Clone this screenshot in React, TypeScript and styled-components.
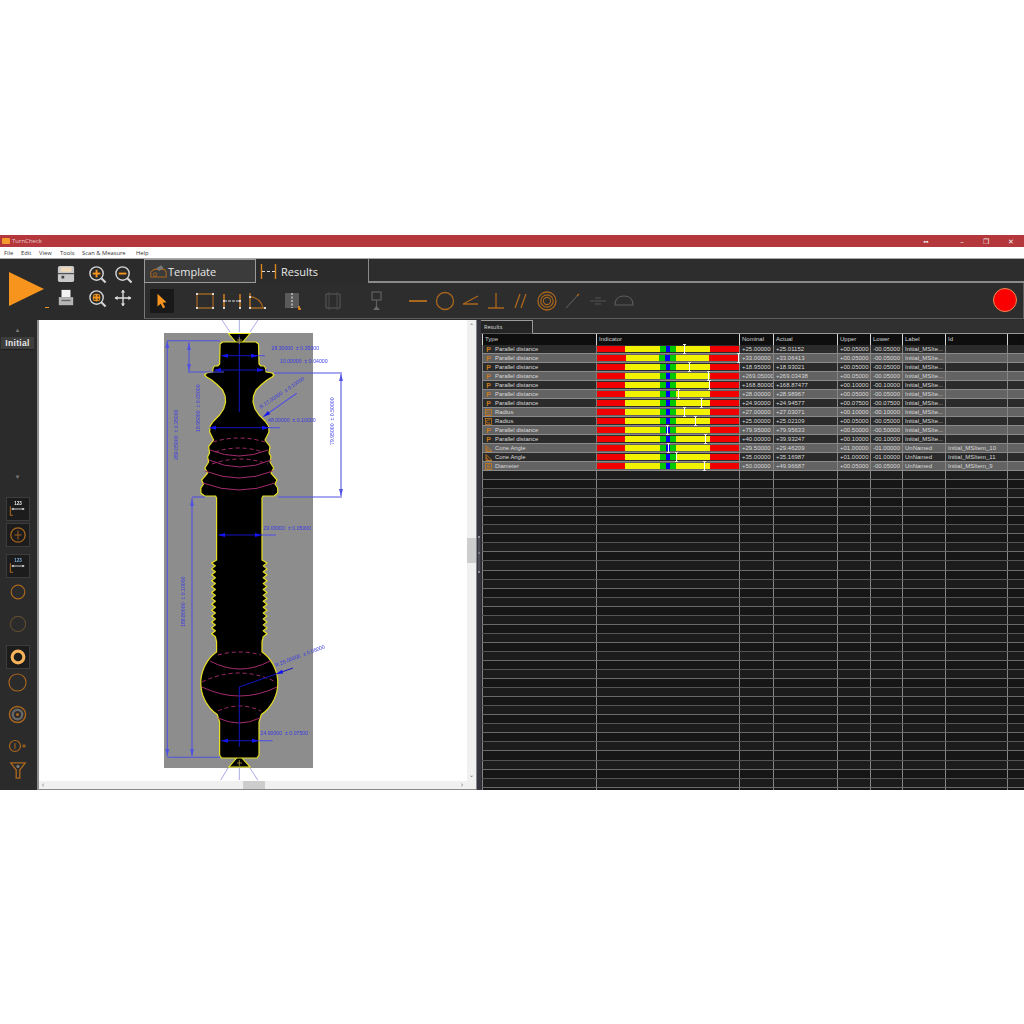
import React from "react";
import styled, { createGlobalStyle } from "styled-components";

const Global = createGlobalStyle`
  html, body { margin: 0; padding: 0; background: #fff; }
  body { font-family: "Open Sans", "Liberation Sans", sans-serif; overflow: hidden; }
`;
const Page = styled.div`
  width: 1024px; height: 1024px; padding-top: 235px; box-sizing: border-box; background: #fff;
`;
const Win = styled.div`
  width: 1024px; height: 555px; display: flex; flex-direction: column; filter: blur(0.5px);
`;
const TitleBar = styled.div`
  height: 12px; background: #b4373b; display: flex; align-items: center; padding: 0 2px; color: #e8c9c9; font-size: 6px; gap: 2px;
`;
const AppLogo = styled.span`width: 8px; height: 6px; background: #f39a2d; border-radius: 1px;`;
const WinButtons = styled.div`
  margin-left: auto; display: flex; align-items: center; color: #eee; font-size: 7px; padding-right: 5px;
`;
const WinButton = styled.span<{ $ml: number }>`
  width: 12px; text-align: center; margin-left: ${p => p.$ml}px;
`;
const MenuBar = styled.div`
  height: 11px; background: #fff; display: flex; align-items: center; font-size: 5.8px; color: #333; padding-left: 4px;
`;
const MenuItem = styled.span<{ $w: number }>`width: ${p => p.$w}px;`;
const Ribbon = styled.div`
  height: 62px; background: #2b2b2b; display: flex; border-top: 1px solid #aaa; box-sizing: border-box;
`;
const Left = styled.div`width: 144px; flex: none; display: flex; padding-left: 9px; box-sizing: border-box;`;
const PlayBox = styled.div`
  position: relative; margin-top: 13px; width: 35px; height: 34px;
  &::after { content: ""; position: absolute; left: 36px; top: 35px; width: 4px; height: 1px; background: #f7941d; }
`;
const FileGrid = styled.div`
  display: grid; grid-template-columns: 30px 32px 20px; grid-auto-rows: 24px; margin: 3px 0 0 7px; justify-items: center; align-items: center;
`;
const RibbonRight = styled.div`flex: 1; display: flex; flex-direction: column;`;
const TabRow = styled.div`display: flex; height: 24px; `;
const TemplateTab = styled.div`
  width: 112px; box-sizing: border-box; background: #3b3b3b; border: 1px solid #9a9a9a; display: flex; align-items: center; gap: 1px; padding-left: 5px; color: #e8e8e8; font-size: 11px;
`;
const ResultsTab = styled.div`
  width: 112px; box-sizing: border-box; background: #2b2b2b; display: flex; align-items: center; gap: 4px; padding-left: 4px; color: #e8e8e8; font-size: 11px;
`;
const TabFill = styled.div`flex: 1; background: #2d2d2d; border-left: 1px solid #8a8a8a; border-bottom: 2px solid #8a8a8a;`;
const ToolPanel = styled.div`
  height: 36px; box-sizing: border-box; border: 1px solid #5c5c5c; border-top: 0; border-left: 1px solid #777; background: #2d2d2d; display: flex; align-items: center; padding-left: 5px;
`;
const Tool = styled.div<{ $gap: number; $active?: boolean }>`
  width: 24px; height: 24px; margin-left: ${p => p.$gap}px; display: flex; align-items: center; justify-content: center; flex: none;
  background: ${p => (p.$active ? "#191919" : "transparent")}; border-radius: 1px;
`;
const RedDot = styled.div`
  width: 22px; height: 22px; border-radius: 50%; background: #fb0000; border: 1.5px solid #ee8a55; margin-left: auto; margin-right: 6px; margin-top: -2px; box-sizing: content-box;
`;
const Main = styled.div`flex: 1; min-height: 0; display: flex;`;
const Sidebar = styled.div`
  width: 39px; flex: none; box-sizing: border-box; background: #2b2b2b; border-right: 2px solid #8e8e8e; display: flex; flex-direction: column; align-items: center; padding-right: 2px;
`;
const Arrow = styled.div<{ $mt: number }>`
  margin-top: ${p => p.$mt}px; color: #777; font-size: 6px; line-height: 8px; height: 8px;
`;
const InitialTag = styled.div`
  margin-top: 3px; width: 33px; height: 12px; background: #3d3d3d; border-bottom: 1px solid #1d1d1d; color: #e6e6e6; font-size: 8.5px; font-weight: 700; letter-spacing: 0.3px; text-align: center; line-height: 12px; font-family: "Liberation Sans", sans-serif;
`;
const SideSlot = styled.div<{ $mt: number; $boxed?: boolean }>`
  margin-top: ${p => p.$mt}px; width: 22px; height: 22px; display: flex; align-items: center; justify-content: center; flex: none;
  background: ${p => (p.$boxed ? "#1c1c1c" : "transparent")}; box-shadow: ${p => (p.$boxed ? "0 0 0 1px #3c3c3c" : "none")};
`;
const CanvasPane = styled.div`width: 437px; flex: none; display: flex; flex-direction: column; background: #fff;`;
const CanvasRow = styled.div`flex: 1; min-height: 0; display: flex;`;
const Drawing = styled.svg`flex: none; display: block; width: 428px; height: 461px;`;
const VScroll = styled.div`
  width: 9px; background: #f0f0f0; position: relative; color: #666; font-size: 6px; line-height: 8px; text-align: center; display: flex; flex-direction: column; justify-content: space-between; padding: 2px 0 2px; box-sizing: border-box;
  &::after { content: ""; position: absolute; top: 218px; left: 0; width: 9px; height: 25px; background: #cdcdcd; }
`;
const HScroll = styled.div`
  height: 9px; background: #f0f0f0; position: relative; border-bottom: 1px solid #888; box-sizing: border-box; font-size: 7px; color: #666; line-height: 8px; padding: 0 13px 0 3px; display: flex; justify-content: space-between;
  &::after { content: ""; position: absolute; top: 0; left: 204px; width: 22px; height: 8px; background: #cdcdcd; }
`;
const Splitter = styled.div`
  width: 5px; flex: none; background: #34343e; border-left: 1px solid #85858d; box-sizing: border-box; position: relative;
  &::after { content: ""; position: absolute; left: 1px; top: 216px; width: 2px; height: 37px; background: linear-gradient(#8a8a9a 0 2px, #4a4a55 2px 16px, #77777f 16px 18px, #4a4a55 18px 35px, #8a8a9a 35px); }
`;
const ResultsPane = styled.div`flex: 1; min-width: 0; background: #2b2b2b; display: flex; flex-direction: column; overflow: hidden;`;
const PaneTabs = styled.div`height: 14px; display: flex; flex: none;`;
const PaneTab = styled.div`
  width: 52px; box-sizing: border-box; background: #242424; border-top: 1px solid #9a9a9a; border-right: 1px solid #9a9a9a; border-bottom: 1px solid #555; color: #ddd; font-size: 5.5px; line-height: 12px; padding-left: 3px;
`;
const PaneFill = styled.div`flex: 1; background: #303030; border-bottom: 1px solid #999;`;
const Table = styled.div`display: flex; flex-direction: column; flex: 1; min-height: 0; overflow: hidden; padding-left: 1px;`;
const cols = "114px 143px 34px 64px 33px 32px 43px 62px 16px";
const HeadRow = styled.div`
  display: grid; grid-template-columns: ${cols}; height: 11px; flex: none; background: #101010;
`;
const HeadCell = styled.div`
  border-left: 1px solid #d5d5d5; color: #cfcfcf; font-size: 6px; line-height: 10px; padding-left: 2px; background: #0e0e0e; overflow: hidden; white-space: nowrap; box-sizing: border-box; font-family: "Liberation Sans", sans-serif;
`;
const DataRow = styled.div<{ $alt: boolean }>`
  display: grid; grid-template-columns: ${cols}; height: 9px; flex: none; background: ${p => (p.$alt ? "#636363" : "#2b2b2b")}; box-sizing: border-box; border-bottom: 1px solid #8a8a8a;
`;
const EmptyRow = styled.div<{ $alt: boolean }>`
  display: grid; grid-template-columns: ${cols}; height: 9.05px; flex: none; background: ${p => (p.$alt ? "#1c1c1c" : "#161616")}; box-sizing: border-box; border-bottom: 1px solid ${p => (p.$alt ? "#6a6a6a" : "#555")};
`;
const Cell = styled.div`
  border-left: 1px solid #858585; color: #d8d8d8; font-size: 6px; line-height: 8px; padding-left: 2px; overflow: hidden; white-space: nowrap; box-sizing: border-box; font-family: "Liberation Sans", sans-serif;
`;
const TypeCell = styled(Cell)`
  display: flex; align-items: center; gap: 3px; padding-left: 2px; font-size: 5.9px;
`;
const TypeIcon = styled.span`
  width: 7px; height: 7px; color: #c97a1e; font-size: 7px; line-height: 7px; font-weight: 700; text-align: center; flex: none; display: flex; justify-content: center;
`;
const IndCell = styled.div`border-left: 1px solid #7a7a7a; position: relative; display: flex; align-items: center; box-sizing: border-box;`;
const Bar = styled.div`display: flex; width: 100%; height: 5.5px;`;
const Seg = styled.span<{ $c: string; $w: number }>`background: ${p => p.$c}; flex: ${p => p.$w} 0 0;`;
const Marker = styled.span`
  position: absolute; top: -1px; width: 1px; height: 10px; background: #fff; margin-left: -0.5px;
  &::before, &::after { content: ""; position: absolute; left: -1px; width: 3px; height: 1px; background: #e8e8e8; }
  &::before { top: 0; } &::after { bottom: 0; }
`;

const O = "#f7941d", M = "#a9661d", D = "#5e4a2e";

const Ic = ({ s = 20, vb = 20, children }: { s?: number; vb?: number; children: React.ReactNode }) => (
  <svg width={s} height={s} viewBox={`0 0 ${vb} ${vb}`} fill="none">{children}</svg>
);
const SaveIcon = () => (
  <Ic s={18}>
    <rect x="1" y="1" width="18" height="18" rx="2" fill="#c9c9c9" />
    <rect x="4" y="2.5" width="12" height="5" fill="#f0d9b8" />
    <rect x="1" y="9" width="18" height="1.2" fill="#444" />
    <rect x="5" y="12" width="3" height="3" fill="#444" />
  </Ic>
);
const PrintIcon = () => (
  <Ic s={18}>
    <rect x="5" y="1" width="10" height="8" fill="#f2f2f2" />
    <path d="M2 9h16v9H2z" fill="#b5b5b5" />
    <rect x="5" y="12" width="10" height="1.5" fill="#666" />
  </Ic>
);
const Mag = ({ kind }: { kind: "in" | "out" | "fit" }) => (
  <Ic s={19}>
    <circle cx="9" cy="9" r="7" stroke="#d5d5d5" strokeWidth="1.5" fill="#2b2b2b" />
    <path d="M14 14l4.5 4.5" stroke="#d5d5d5" strokeWidth="2.2" />
    {kind !== "out" && <path d="M9 5v8" stroke={O} strokeWidth="2" />}
    <path d="M5 9h8" stroke={O} strokeWidth="2" />
    {kind === "fit" && <path d="M6 6h6v6H6z" stroke={O} strokeWidth="1" />}
  </Ic>
);
const MoveIcon = () => (
  <Ic s={18}>
    <path d="M10 1v18M1 10h18" stroke="#e0e0e0" strokeWidth="1.5" />
    <path d="M10 1l-2.5 3h5zM10 19l-2.5-3h5zM1 10l3-2.5v5zM19 10l-3-2.5v5z" fill="#e0e0e0" />
  </Ic>
);
const CursorIcon = () => (
  <Ic s={18}>
    <path d="M5 2l10 9.5-4.2.4 2.7 5-2.4 1.1-2.5-5-3.6 3z" fill={O} />
  </Ic>
);
const dot = (x: number, y: number, k: number) => <rect key={k} x={x - 1} y={y - 1} width="2" height="2" fill="#d8d8d8" />;
const DimRect = () => (
  <Ic>
    <path d="M2 3h16M2 17h16" stroke={O} strokeWidth="1.2" opacity=".8" />
    <path d="M2 3v14M18 3v14" stroke={M} strokeWidth="1.2" />
    {[[2, 3], [18, 3], [2, 17], [18, 17]].map(([x, y], i) => dot(x, y, i))}
  </Ic>
);
const DimH = () => (
  <Ic>
    <path d="M2 3v14M18 3v14" stroke={O} strokeWidth="1.4" opacity=".85" />
    <path d="M2 10h16" stroke="#ddd" strokeWidth="1" strokeDasharray="3 1" />
    {[[2, 10], [18, 10], [2, 17], [18, 17]].map(([x, y], i) => dot(x, y, i))}
  </Ic>
);
const DimCorner = () => (
  <Ic>
    <path d="M3 2v15h15" stroke={O} strokeWidth="1.2" opacity=".85" />
    <path d="M3 6c7 0 12 5 13 11" stroke={M} strokeWidth="1.3" />
    {[[3, 6], [3, 17], [18, 17]].map(([x, y], i) => dot(x, y, i))}
  </Ic>
);
const DimBlock = () => (
  <Ic>
    <rect x="3" y="2" width="14" height="15" fill="#5a5a5a" />
    <path d="M10 2v15" stroke="#ddd" strokeWidth="1.2" strokeDasharray="2 1.5" />
    <path d="M17 15v3h2" stroke={O} strokeWidth="1.5" />
  </Ic>
);
const DimDim = () => (
  <Ic>
    <path d="M3 3h14v14H3z" stroke="#5a5a5a" strokeWidth="1" />
    <path d="M6 1v18M14 1v18" stroke="#4d4d4d" strokeWidth="1" />
  </Ic>
);
const ProbeIcon = () => (
  <Ic>
    <rect x="5" y="1" width="9" height="8" stroke="#5f5f5f" strokeWidth="1.2" />
    <path d="M9.5 9v8" stroke="#5f5f5f" strokeWidth="1.2" />
    <path d="M6 19h7l-3.5-4z" fill="#6a6a6a" />
  </Ic>
);
const shape = {
  line: <path d="M1 10h18" stroke={M} strokeWidth="2" />,
  circle: <circle cx="10" cy="10" r="8.5" stroke={M} strokeWidth="1.3" />,
  angle: <path d="M18 5L3 13h15" stroke={M} strokeWidth="1.3" />,
  perp: <path d="M10 2v15M2 17h16" stroke={M} strokeWidth="1.3" />,
  par: <path d="M9 3L4 17M15 3l-5 14" stroke={M} strokeWidth="1.3" />,
  conc: (
    <>
      <circle cx="10" cy="10" r="9" stroke={M} strokeWidth="1.3" />
      <circle cx="10" cy="10" r="6.2" stroke={M} strokeWidth="1.2" />
      <circle cx="10" cy="10" r="3.6" stroke={M} strokeWidth="1.1" />
    </>
  ),
  needle: (
    <>
      <path d="M3 17L14 5" stroke="#5c5c5c" strokeWidth="1.1" />
      <path d="M14 5l2-2" stroke={M} strokeWidth="1.4" />
    </>
  ),
  sym: <path d="M2 10h16M7 7h6M7 13h6" stroke="#555" strokeWidth="1.1" />,
  dome: <path d="M1 14h18C19 8 15 5 10 5S1 8 1 14z" stroke="#5c5c5c" strokeWidth="1.1" />,
};
const tools: { g: number; el: React.ReactNode; a?: boolean }[] = [
  { g: 0, el: <CursorIcon />, a: true },
  { g: 19, el: <DimRect /> },
  { g: 3, el: <DimH /> },
  { g: 1, el: <DimCorner /> },
  { g: 11, el: <DimBlock /> },
  { g: 17, el: <DimDim /> },
  { g: 20, el: <ProbeIcon /> },
  { g: 17, el: <Ic>{shape.line}</Ic> },
  { g: 3, el: <Ic>{shape.circle}</Ic> },
  { g: 1, el: <Ic>{shape.angle}</Ic> },
  { g: 2, el: <Ic>{shape.perp}</Ic> },
  { g: 1, el: <Ic>{shape.par}</Ic> },
  { g: 2, el: <Ic>{shape.conc}</Ic> },
  { g: 2, el: <Ic>{shape.needle}</Ic> },
  { g: 1, el: <Ic>{shape.sym}</Ic> },
  { g: 2, el: <Ic>{shape.dome}</Ic> },
];

const DimCard = ({ light }: { light?: boolean }) => (
  <Ic s={18}>
    <text x="10" y="5.5" fontSize="5" fontWeight="700" fill={light ? "#7fb0e0" : "#eee"} textAnchor="middle" fontFamily="Liberation Sans">123</text>
    <path d="M3 10h14" stroke="#ddd" strokeWidth="1" />
    <path d="M5 8.5l-2 1.5 2 1.5zM15 8.5l2 1.5-2 1.5z" fill="#eee" />
    <path d="M1.5 7v10h3" stroke={M} strokeWidth="1.2" />
  </Ic>
);

// ---- part geometry, page coordinates ----
const CX = 239.3;
const teeth: number[][] = [];
for (let i = 0; i < 13; i++) {
  const y = 563 + i * 5.9;
  teeth.push([267, y], [263.2, y + 2.9]);
}
const ball: number[][] = [];
for (let a = -53; a <= 59; a += 6) {
  const r = (a * Math.PI) / 180;
  ball.push([CX + 38.5 * Math.cos(r), 683 + 38.5 * Math.sin(r)]);
}
const half: number[][] = [
  [241, 342], [256, 342], [258.5, 344], [259, 364], [261, 366], [264, 366], [265.5, 368], [266, 372],
  [272, 373], [274, 375], [272, 377], [267, 380], [261, 385], [256, 390], [253.5, 396], [253, 402], [255, 409], [259, 415],
  [265, 421], [268.5, 426], [269, 432], [267, 436], [265, 440], [270, 446.7], [269, 453], [271, 456.7], [270, 462],
  [273.7, 468], [271, 473], [277, 480], [275, 484], [277.7, 488], [277.7, 493], [274, 496], [263, 496], [262, 498],
  [262, 560], ...teeth, [262, 642], [262, 652], ...ball, [259, 722], [259, 755], [257, 758], [241, 758],
];
const profile = [...half, ...[...half].reverse().map(([x, y]) => [2 * CX - x, y])]
  .map(([x, y]) => `${x.toFixed(1)},${y.toFixed(1)}`)
  .join(" ");

const arcs: { x1: number; x2: number; y: number; b: number; dash?: boolean }[] = [
  { x1: 213, x2: 265, y: 442, b: -4, dash: true },
  { x1: 210, x2: 268, y: 450, b: 6 },
  { x1: 215, x2: 263, y: 452, b: -4, dash: true },
  { x1: 209, x2: 271, y: 460, b: 7 },
  { x1: 212, x2: 268, y: 464, b: -5, dash: true },
  { x1: 205, x2: 273, y: 471, b: 7 },
  { x1: 203, x2: 275, y: 483, b: 7 },
  { x1: 218, x2: 261, y: 655, b: -3, dash: true },
  { x1: 210, x2: 270, y: 661, b: 8 },
  { x1: 202, x2: 276, y: 682, b: -9, dash: true },
  { x1: 202, x2: 277, y: 687, b: 9 },
  { x1: 218, x2: 261, y: 711, b: -5, dash: true },
  { x1: 218, x2: 260, y: 718, b: 5 },
];
const BL2 = "#5252e2";
const lines = [
  [167.3, 341, 167.3, 756], [167, 340.7, 220, 340.7], [167, 757.3, 220, 757.3],
  [189, 342, 189, 372], [188, 372, 224, 372],
  [341, 374, 341, 496], [274, 373, 342, 373], [278, 497, 342, 497],
  [192, 498, 192, 756], [192, 497, 205, 497],
  [296.7, 393.3, 263.3, 416.7], [268, 427.7, 280, 427.7],
  [262, 535, 276, 535], [259, 740.7, 272.7, 740.7], [258, 355.7, 265, 355.7], [265, 370, 268, 370],
];
const darkLines = [
  [222, 355.7, 258, 355.7], [215, 370, 263, 370], [210, 427.7, 269, 427.7], [219, 535, 262, 535], [221.5, 740.7, 258, 740.7],
  [CX, 335, CX, 412], [CX, 747, CX, 687], [CX, 687, 293, 668],
];
const heads = [
  [167.3, 341, 0], [167.3, 756, 180], [189, 343, 0], [189, 371, 180], [341, 374, 0], [341, 496, 180], [192, 499, 0], [192, 756, 180],
  [221, 355.7, -90], [258, 355.7, 90], [214, 370, -90], [264, 370, 90], [209, 427.7, -90], [269, 427.7, 90],
  [218, 535, -90], [262, 535, 90], [221, 740.7, -90], [259, 740.7, 90], [263.3, 416.7, 235], [276, 674, 250],
];
const labels: { t: string; x: number; y: number; r?: number }[] = [
  { t: "28.30000  ± 0.35000", x: 271.5, y: 349.5 },
  { t: "10.00000  ± 0.04000", x: 280, y: 363 },
  { t: "R 27.00000  ± 0.10000", x: 261, y: 409, r: -34 },
  { t: "48.00000  ± 0.10000", x: 268, y: 421.5 },
  { t: "79.95000  ± 0.50000", x: 333.5, y: 445, r: -90 },
  { t: "18.95000  ± 0.05000", x: 199.5, y: 432, r: -90 },
  { t: "269.05000  ± 0.35000", x: 177.5, y: 460, r: -90 },
  { t: "29.00000  ± 0.05000", x: 263.5, y: 529.5 },
  { t: "168.80000  ± 0.10000", x: 185, y: 627, r: -90 },
  { t: "R 25.00000  ± 0.05000", x: 276, y: 667, r: -21 },
  { t: "24.90000  ± 0.07500", x: 260.5, y: 734.5 },
];
const rays = [
  [222, 320, 230, 332], [239.3, 320, 239.3, 332], [258, 320, 250, 332],
  [220.7, 780, 228, 768], [239.3, 780, 239.3, 768], [257.7, 780, 250, 768],
];

const Part = () => (
  <Drawing viewBox="39 320 428 461">
    <rect x="164" y="333" width="149" height="435" fill="#8d8d8d" />
    {rays.map((l, i) => (
      <line key={i} x1={l[0]} y1={l[1]} x2={l[2]} y2={l[3]} stroke="#a9a9e6" strokeWidth="1" />
    ))}
    <polygon points="228.5,333.5 250,333.5 241,344 237.5,344" fill="#000" stroke="#ecea1e" strokeWidth="1.1" />
    <polygon points="229,767 250,767 241,757 237.5,757" fill="#000" stroke="#ecea1e" strokeWidth="1.1" />
    <polygon points={profile} fill="#000" stroke="#e6df24" strokeWidth="1.2" strokeLinejoin="round" />
    {arcs.map((a, i) => (
      <path key={i} d={`M${a.x1} ${a.y}Q${(a.x1 + a.x2) / 2} ${a.y + a.b * 2} ${a.x2} ${a.y}`} fill="none" stroke="#a32c6c" strokeWidth="1" strokeDasharray={a.dash ? "4 3" : undefined} />
    ))}
    {lines.map((l, i) => (
      <line key={i} x1={l[0]} y1={l[1]} x2={l[2]} y2={l[3]} stroke={BL2} strokeWidth="1.1" />
    ))}
    {darkLines.map((l, i) => (
      <line key={i} x1={l[0]} y1={l[1]} x2={l[2]} y2={l[3]} stroke="#1414c0" strokeWidth="1" />
    ))}
    <path d="M237 340h5M239.3 337v7M237 763h5M239.3 760v6" stroke="#b8a23a" strokeWidth="0.8" />
    {heads.map((h, i) => (
      <path key={i} d="M0 0l-2 7h4z" transform={`translate(${h[0]} ${h[1]}) rotate(${h[2]})`} fill={i < 8 ? BL2 : "#1414f0"} />
    ))}
    {labels.map((l, i) => (
      <text key={i} x={l.x} y={l.y} fontSize="5.2" fill="#3a3ae6" fontFamily="Liberation Sans" xmlSpace="preserve" transform={l.r ? `rotate(${l.r} ${l.x} ${l.y})` : undefined}>{l.t}</text>
    ))}
  </Drawing>
);

// ---- table data ----
const P = "Parallel distance";
const rows: [string, number, string, string, string, string, string, string][] = [
  [P, 684.7, "+25.00000", "+25.01152", "+00.05000", "-00.05000", "Initial_MSIte...", ""],
  [P, 738.7, "+33.00000", "+33.06413", "+00.05000", "-00.05000", "Initial_MSIte...", ""],
  [P, 689, "+18.95000", "+18.93021", "+00.05000", "-00.05000", "Initial_MSIte...", ""],
  [P, 708, "+269.05000", "+269.03438", "+00.05000", "-00.05000", "Initial_MSIte...", ""],
  [P, 709, "+168.80000", "+168.87477", "+00.10000", "-00.10000", "Initial_MSIte...", ""],
  [P, 678, "+28.00000", "+28.98967", "+00.05000", "-00.05000", "Initial_MSIte...", ""],
  [P, 701.7, "+24.90000", "+24.94577", "+00.07500", "-00.07500", "Initial_MSIte...", ""],
  ["Radius", 684.7, "+27.00000", "+27.03071", "+00.10000", "-00.10000", "Initial_MSIte...", ""],
  ["Radius", 695.7, "+25.00000", "+25.02109", "+00.05000", "-00.05000", "Initial_MSIte...", ""],
  [P, 667, "+79.95000", "+79.95633", "+00.50000", "-00.50000", "Initial_MSIte...", ""],
  [P, 705, "+40.00000", "+39.93247", "+00.10000", "-00.10000", "Initial_MSIte...", ""],
  ["Cone Angle", 668.7, "+29.50000", "+29.46209", "+01.00000", "-01.00000", "UnNamed", "Initial_MSItem_10"],
  ["Cone Angle", 676.3, "+35.00000", "+35.16987", "+01.00000", "-01.00000", "UnNamed", "Initial_MSItem_11"],
  ["Diameter", 704.7, "+50.00000", "+49.96687", "+00.05000", "-00.05000", "UnNamed", "Initial_MSItem_9"],
];
const segs: [string, number][] = [["#f00000", 28], ["#f2f200", 35], ["#00c800", 6], ["#0000f0", 5], ["#00c800", 6], ["#f2f200", 34], ["#f00000", 29]];
const segsNarrow: [string, number][] = [["#f00000", 29.5], ["#f2f200", 33], ["#00c800", 6], ["#0000f0", 5], ["#00c800", 6], ["#f2f200", 33], ["#f00000", 30.5]];

const TypeGlyph = ({ t }: { t: string }) => {
  if (t === "Radius")
    return (
      <TypeIcon>
        <svg width="7" height="7" viewBox="0 0 7 7" fill="none"><rect x=".5" y=".5" width="6" height="6" stroke="#c97a1e" strokeWidth=".8" /><path d="M5 2H3a1.5 1.5 0 0 0 0 3h2" stroke="#c97a1e" strokeWidth=".8" /></svg>
      </TypeIcon>
    );
  if (t === "Cone Angle")
    return (
      <TypeIcon>
        <svg width="7" height="7" viewBox="0 0 7 7" fill="none"><path d="M1 .5v6h6zM1 3l2.5 3.5" stroke="#c97a1e" strokeWidth=".9" /></svg>
      </TypeIcon>
    );
  if (t === "Diameter")
    return (
      <TypeIcon>
        <svg width="7" height="7" viewBox="0 0 7 7" fill="none"><rect x=".5" y=".5" width="6" height="6" stroke="#c97a1e" strokeWidth=".8" /><path d="M5 2H2.5v1.5H4.5V5H2" stroke="#c97a1e" strokeWidth=".7" /></svg>
      </TypeIcon>
    );
  return <TypeIcon>P</TypeIcon>;
};

const heads2 = ["Type", "Indicator", "Nominal", "Actual", "Upper", "Lower", "Label", "Id", ""];

export default function App() {
  return (
    <Page>
      <Global />
      <Win>
        <TitleBar>
          <AppLogo />
          <span>TurnCheck</span>
          <WinButtons>
            <WinButton $ml={0}>▪▪</WinButton>
            <WinButton $ml={24}>–</WinButton>
            <WinButton $ml={12}>❐</WinButton>
            <WinButton $ml={13}>✕</WinButton>
          </WinButtons>
        </TitleBar>
        <MenuBar>
          {[["File", 17], ["Edit", 18], ["View", 21], ["Tools", 22], ["Scan & Measure", 54], ["Help", 20]].map(([t, w]) => (
            <MenuItem key={t as string} $w={w as number}>{t}</MenuItem>
          ))}
        </MenuBar>
        <Ribbon>
          <Left>
            <PlayBox>
              <svg width="35" height="34" viewBox="0 0 35 34"><path d="M0 0l35 17L0 34z" fill={O} /></svg>
            </PlayBox>
            <FileGrid>
              <SaveIcon />
              <Mag kind="in" />
              <Mag kind="out" />
              <PrintIcon />
              <Mag kind="fit" />
              <MoveIcon />
            </FileGrid>
          </Left>
          <RibbonRight>
            <TabRow>
              <TemplateTab>
                <svg width="17" height="15" viewBox="0 0 20 17" fill="none">
                  <path d="M1 15V9l4-3h12l2 3v6z" stroke={M} strokeWidth="1.2" />
                  <path d="M7 5l6-4 3 3-5 4" fill="#777" />
                  <circle cx="6" cy="12" r="2" stroke={M} />
                </svg>
                Template
              </TemplateTab>
              <ResultsTab>
                <svg width="17" height="17" viewBox="0 0 17 17" fill="none">
                  <path d="M1.5 1v15M15.5 1v15" stroke={O} strokeWidth="1.4" opacity=".85" />
                  <path d="M2 8.5h13" stroke="#ddd" strokeWidth="1.1" strokeDasharray="3 2" />
                </svg>
                Results
              </ResultsTab>
              <TabFill />
            </TabRow>
            <ToolPanel>
              {tools.map((t, i) => (
                <Tool key={i} $gap={t.g} $active={t.a}>{t.el}</Tool>
              ))}
              <RedDot />
            </ToolPanel>
          </RibbonRight>
        </Ribbon>
        <Main>
          <Sidebar>
            <Arrow $mt={6}>▲</Arrow>
            <InitialTag>Initial</InitialTag>
            <Arrow $mt={123}>▼</Arrow>
            <SideSlot $mt={17} $boxed><DimCard /></SideSlot>
            <SideSlot $mt={4} $boxed><Ic s={18}><circle cx="10" cy="10" r="8" stroke={M} strokeWidth="1.4" /><path d="M10 5v10M6 10h8" stroke={M} strokeWidth="1" /></Ic></SideSlot>
            <SideSlot $mt={9} $boxed><DimCard light /></SideSlot>
            <SideSlot $mt={4}><Ic s={16}><circle cx="10" cy="10" r="8.5" stroke={M} strokeWidth="1.5" /></Ic></SideSlot>
            <SideSlot $mt={10}><Ic s={18}><circle cx="10" cy="10" r="8.5" stroke={D} strokeWidth="1.3" /></Ic></SideSlot>
            <SideSlot $mt={11} $boxed><Ic s={18}><circle cx="10" cy="10" r="6.5" stroke="#f7b45a" strokeWidth="3.4" /></Ic></SideSlot>
            <SideSlot $mt={3}><Ic s={19}><circle cx="10" cy="10" r="9" stroke={M} strokeWidth="1.2" /></Ic></SideSlot>
            <SideSlot $mt={10}><Ic s={19}><circle cx="10" cy="10" r="8.5" stroke={M} strokeWidth="1.5" /><circle cx="10" cy="10" r="5" stroke="#666" strokeWidth="2.6" /><circle cx="10" cy="10" r="1.6" fill={M} /></Ic></SideSlot>
            <SideSlot $mt={10}><Ic s={20}><circle cx="7" cy="10" r="5.5" stroke={M} strokeWidth="1.2" /><path d="M7 7v6M16 8v4M14 10h4" stroke={M} strokeWidth="1" /></Ic></SideSlot>
            <SideSlot $mt={2}><Ic s={18}><path d="M2 2h16l-6 8v9H8v-9z" stroke={M} strokeWidth="1.5" /><circle cx="10" cy="6" r="1.8" fill="#777" /></Ic></SideSlot>
          </Sidebar>
          <CanvasPane>
            <CanvasRow>
              <Part />
              <VScroll><span>⌃</span><span>⌄</span></VScroll>
            </CanvasRow>
            <HScroll><span>‹</span><span>›</span></HScroll>
          </CanvasPane>
          <Splitter />
          <ResultsPane>
            <PaneTabs>
              <PaneTab>Results</PaneTab>
              <PaneFill />
            </PaneTabs>
            <Table>
              <HeadRow>
                {heads2.map((h, i) => <HeadCell key={i}>{h}</HeadCell>)}
              </HeadRow>
              {rows.map((r, i) => (
                <DataRow key={i} $alt={i % 2 === 1}>
                  <TypeCell><TypeGlyph t={r[0]} />{r[0]}</TypeCell>
                  <IndCell>
                    <Bar>
                      {(i === 1 ? segsNarrow : segs).map(([c, w], k) => <Seg key={k} $c={c} $w={w} />)}
                    </Bar>
                    <Marker style={{ left: r[1] - 597 }} />
                  </IndCell>
                  <Cell>{r[2]}</Cell>
                  <Cell>{r[3]}</Cell>
                  <Cell>{r[4]}</Cell>
                  <Cell>{r[5]}</Cell>
                  <Cell>{r[6]}</Cell>
                  <Cell>{r[7]}</Cell>
                  <Cell />
                </DataRow>
              ))}
              {Array.from({ length: 49 }, (_, i) => (
                <EmptyRow key={i} $alt={i % 2 === 0}>
                  {heads2.map((_, k) => <Cell key={k} />)}
                </EmptyRow>
              ))}
            </Table>
          </ResultsPane>
        </Main>
      </Win>
    </Page>
  );
}
